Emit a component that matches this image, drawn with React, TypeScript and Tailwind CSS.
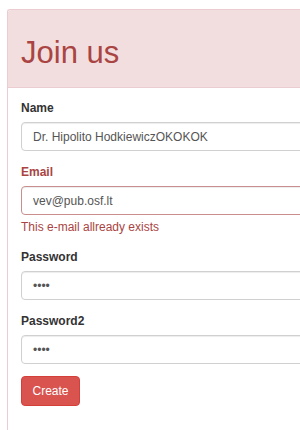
export default function App() {
  return (
    <div className="min-h-[430px] overflow-hidden bg-white pl-[7px] pt-[9px] font-['Liberation_Sans',Arial,sans-serif]">
      <div className="w-[320px] min-h-[421px] rounded-tl-[3px] border-l border-t border-[#ebccd1] bg-white">
        {/* Heading */}
        <div className="rounded-tl-[3px] border-b border-[#ebccd1] bg-[#f2dede] px-[13px] pt-[9px] pb-[9px]">
          <h1 className="mt-[17px] mb-[8px] text-[31px] leading-[34px] font-normal text-[#a94442]">Join us</h1>
        </div>

        {/* Body */}
        <form className="px-[13px] pt-[12px] text-[12px] leading-[17px] text-[#333]">
          <div className="mb-[13px]">
            <label className="mb-[5px] block font-bold">Name</label>
            <input
              type="text"
              defaultValue="Dr. Hipolito HodkiewiczOKOKOK"
              className="block h-[29px] w-full rounded-[4px] border border-[#d0d0d0] px-[11px] text-[12px] text-[#555] shadow-[inset_0_1px_1px_rgba(0,0,0,0.075)] outline-none"
            />
          </div>

          <div className="mb-[13px]">
            <label className="mb-[5px] block font-bold text-[#a94442]">Email</label>
            <input
              type="text"
              defaultValue="vev@pub.osf.lt"
              className="block h-[29px] w-full rounded-[4px] border border-[#c98f8f] px-[11px] text-[12px] text-[#555] shadow-[inset_0_1px_1px_rgba(0,0,0,0.075)] outline-none"
            />
            <span className="mt-[4px] block text-[#a94442]">This e-mail allready exists</span>
          </div>

          <div className="mb-[13px]">
            <label className="mb-[5px] block font-bold">Password</label>
            <input
              type="password"
              defaultValue="abcd"
              className="block h-[29px] w-full rounded-[4px] border border-[#d0d0d0] px-[11px] text-[12px] text-[#555] shadow-[inset_0_1px_1px_rgba(0,0,0,0.075)] outline-none"
            />
          </div>

          <div className="mb-[12px]">
            <label className="mb-[5px] block font-bold">Password2</label>
            <input
              type="password"
              defaultValue="abcd"
              className="block h-[29px] w-full rounded-[4px] border border-[#d0d0d0] px-[11px] text-[12px] text-[#555] shadow-[inset_0_1px_1px_rgba(0,0,0,0.075)] outline-none"
            />
          </div>

          <button
            type="button"
            className="h-[30px] w-[59px] rounded-[4px] border border-[#d43f3a] bg-[#d9534f] text-[12px] text-white"
          >
            Create
          </button>
        </form>
      </div>
    </div>
  )
}
